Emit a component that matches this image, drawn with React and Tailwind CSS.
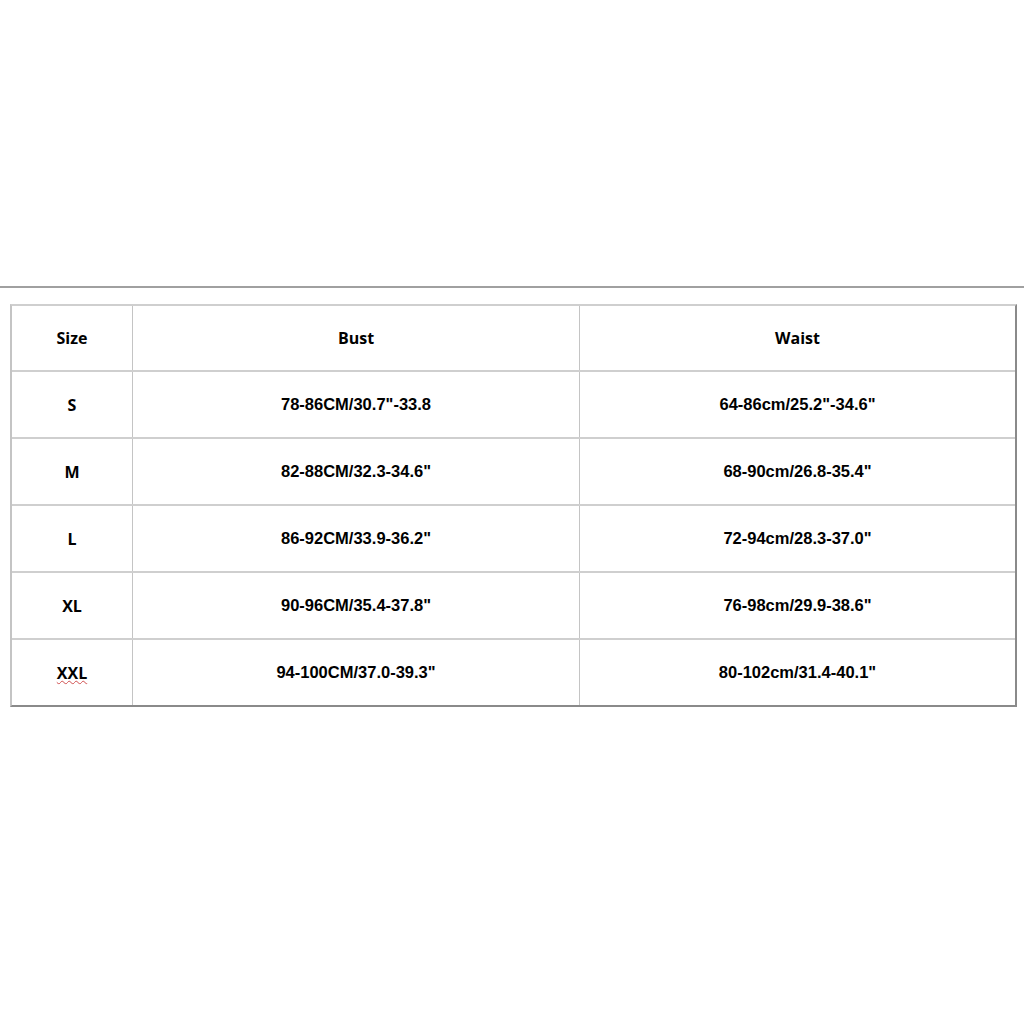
import React from 'react';

const rows = [
  ['S', '78-86CM/30.7"-33.8', '64-86cm/25.2"-34.6"'],
  ['M', '82-88CM/32.3-34.6"', '68-90cm/26.8-35.4"'],
  ['L', '86-92CM/33.9-36.2"', '72-94cm/28.3-37.0"'],
  ['XL', '90-96CM/35.4-37.8"', '76-98cm/29.9-38.6"'],
  ['XXL', '94-100CM/37.0-39.3"', '80-102cm/31.4-40.1"'],
];

const Cell = ({ children, last, className = '' }) => (
  <div
    className={`flex items-center justify-center ${last ? '' : 'border-r border-[#c4c4c4]'} ${className}`}
  >
    {children}
  </div>
);

export default function App() {
  return (
    <div className="w-[1024px] h-[1024px] bg-white text-black">
      <div className="h-[286px]" />
      <div className="h-[2px] bg-[#a0a0a0]" />
      <div className="h-[16px]" />
      <div className="ml-[10px] w-[1007px] border-t-2 border-l-2 border-t-[#cfcfcf] border-l-[#c4c4c4] border-r-2 border-b-2 border-r-[#8a8a8a] border-b-[#8a8a8a]">
        <div className="grid grid-cols-[121px_447px_1fr] h-[64px] font-['Open_Sans',sans-serif] font-bold text-[16px]">
          <Cell>Size</Cell>
          <Cell>Bust</Cell>
          <Cell last>Waist</Cell>
        </div>
        {rows.map(([size, bust, waist]) => (
          <div
            key={size}
            className="grid grid-cols-[121px_447px_1fr] h-[67px] border-t-2 border-[#cfcfcf] font-['Liberation_Sans',Arial,sans-serif] font-bold text-[16.5px]"
          >
            <Cell className="font-['Open_Sans',sans-serif] text-[16px]">
              {size === 'XXL' ? (
                <span className="underline decoration-wavy decoration-[#d05050] decoration-1 underline-offset-1">
                  XXL
                </span>
              ) : (
                size
              )}
            </Cell>
            <Cell>{bust}</Cell>
            <Cell last>{waist}</Cell>
          </div>
        ))}
      </div>
    </div>
  );
}
